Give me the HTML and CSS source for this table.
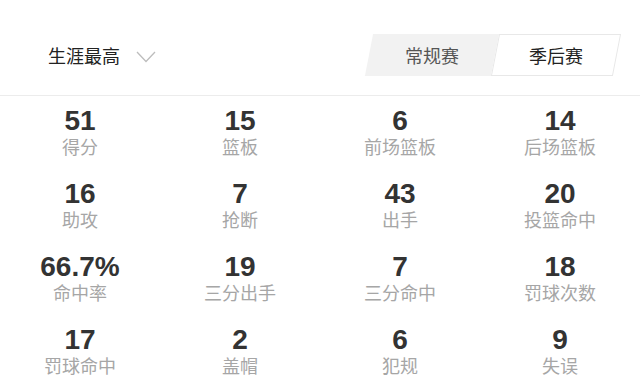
FILE: index.html
```html
<!DOCTYPE html>
<html lang="zh-CN">
<head>
    <meta charset="utf-8">
    <title>生涯最高</title>
    <link rel="stylesheet" href="styles.css">
</head>
<body>
    <div class="head">
        <div class="pick">
            生涯最高
            <svg class="arrow" width="20" height="12" viewBox="0 0 20 12"><polyline points="1,1 10,10.5 19,1" fill="none" stroke="#bdbdbd" stroke-width="1.3"/></svg>
        </div>
        <div class="tabs">
            <a class="tab">
                <span>常规赛</span>
            </a>
            <a class="tab on">
                <span>季后赛</span>
            </a>
        </div>
    </div>
    <ul class="stats">
        <li><b>51</b><span>得分</span></li>
        <li><b>15</b><span>篮板</span></li>
        <li><b>6</b><span>前场篮板</span></li>
        <li><b>14</b><span>后场篮板</span></li>
        <li><b>16</b><span>助攻</span></li>
        <li><b>7</b><span>抢断</span></li>
        <li><b>43</b><span>出手</span></li>
        <li><b>20</b><span>投篮命中</span></li>
        <li><b>66.7%</b><span>命中率</span></li>
        <li><b>19</b><span>三分出手</span></li>
        <li><b>7</b><span>三分命中</span></li>
        <li><b>18</b><span>罚球次数</span></li>
        <li><b>17</b><span>罚球命中</span></li>
        <li><b>2</b><span>盖帽</span></li>
        <li><b>6</b><span>犯规</span></li>
        <li><b>9</b><span>失误</span></li>
    </ul>
</body>
</html>
```

FILE: styles.css
```css
*{margin:0;padding:0;}
body{background:#fff;color:#333;font-family:"Liberation Sans","Noto Sans CJK SC",sans-serif;overflow:hidden;}
ul{list-style:none;}

.head{height:95px;border-bottom:1px solid #ececec;display:flex;align-items:flex-start;justify-content:space-between;padding:0 23px 0 48px;}
.pick{display:flex;align-items:center;font-size:18px;line-height:24px;color:#222;margin-top:45px;}
.pick .arrow{margin-left:16px;margin-top:-1px;}

.tabs{display:flex;height:42px;margin-top:34px;}
.tab{display:flex;align-items:center;justify-content:center;height:42px;box-sizing:border-box;transform:skewX(-11deg);font-size:18px;color:#555;background:#f2f2f2;width:126px;}
.tab span{transform:skewX(11deg);}
.tab.on{width:122px;background:#fff;border:1px solid #e8e8e8;color:#222;}

.stats{display:grid;grid-template-columns:repeat(4,160px);grid-auto-rows:73px;padding-top:10px;text-align:center;}
.stats li{display:flex;flex-direction:column;align-items:center;}
.stats b{font-size:28px;line-height:30px;font-weight:bold;color:#333;}
.stats span{font-size:18px;line-height:24px;color:#a6a6a6;}
```
